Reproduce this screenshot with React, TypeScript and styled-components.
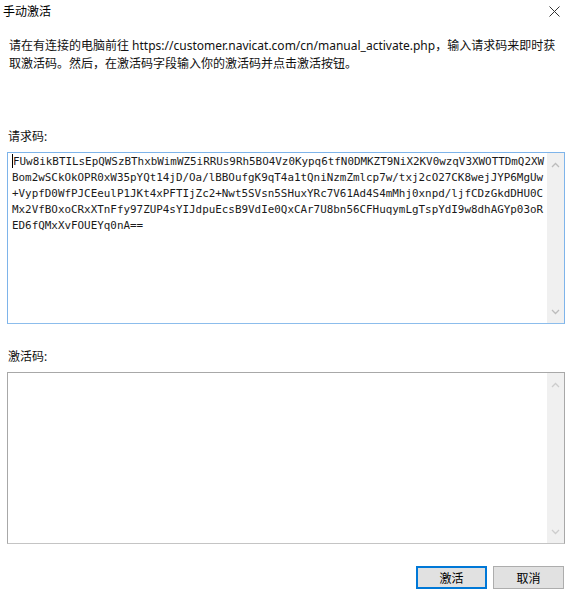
import React from 'react';
import styled, { createGlobalStyle } from 'styled-components';

const requestLines = [
  'FUw8ikBTILsEpQWSzBThxbWimWZ5iRRUs9Rh5BO4Vz0Kypq6tfN0DMKZT9NiX2KV0wzqV3XWOTTDmQ2XW',
  'Bom2wSCkOkOPR0xW35pYQt14jD/Oa/lBBOufgK9qT4a1tQniNzmZmlcp7w/txj2cO27CK8wejJYP6MgUw',
  '+VypfD0WfPJCEeulP1JKt4xPFTIjZc2+Nwt5SVsn5SHuxYRc7V61Ad4S4mMhj0xnpd/ljfCDzGkdDHU0C',
  'Mx2VfBOxoCRxXTnFfy97ZUP4sYIJdpuEcsB9VdIe0QxCAr7U8bn56CFHuqymLgTspYdI9w8dhAGYp03oR',
  'ED6fQMxXvFOUEYq0nA==',
];

const GlobalStyle = createGlobalStyle`
  html, body {
    margin: 0;
    padding: 0;
    background: #ffffff;
  }
  body {
    font-family: "Noto Sans", "Noto Sans CJK SC", sans-serif;
    color: #000;
  }
`;

const Chevron = ({ up, color }: { up?: boolean; color: string }) => (
  <svg width="9" height="6" viewBox="0 0 9 6">
    <path
      d={up ? 'M1 5 L4.5 1.5 L8 5' : 'M1 1 L4.5 4.5 L8 1'}
      fill="none"
      stroke={color}
      strokeWidth="1.3"
    />
  </svg>
);

const App = () => {
  return (
    <Dialog>
      <GlobalStyle />
      <TitleBar>
        <Title>手动激活</Title>
        <CloseButton>
          <svg width="11" height="11" viewBox="0 0 11 11">
            <path d="M0.5 0.5 L10.5 10.5 M10.5 0.5 L0.5 10.5" stroke="#333" strokeWidth="1" />
          </svg>
        </CloseButton>
      </TitleBar>
      <Body>
        <Intro>
          请在有连接的电脑前往 https://customer.navicat.com/cn/manual_activate.php，输入请求码来即时获
          <br />
          取激活码。然后，在激活码字段输入你的激活码并点击激活按钮。
        </Intro>
        <FieldLabel $gap={56}>请求码:</FieldLabel>
        <TextBox $focused>
          <Code>
            <Caret />
            {requestLines.join('\n')}
          </Code>
          <ScrollBar>
            <Chevron up color="#bcbcbc" />
            <Chevron color="#bcbcbc" />
          </ScrollBar>
        </TextBox>
        <FieldLabel $gap={25}>激活码:</FieldLabel>
        <TextBox>
          <Code />
          <ScrollBar>
            <Chevron up color="#cdcdcd" />
            <Chevron color="#cdcdcd" />
          </ScrollBar>
        </TextBox>
        <Actions>
          <Button $primary>激活</Button>
          <Button>取消</Button>
        </Actions>
      </Body>
    </Dialog>
  );
};

const Dialog = styled.div`
  width: 571px;
  height: 595px;
  display: flex;
  flex-direction: column;
  background: #ffffff;
  font-size: 12px;
`;

const TitleBar = styled.div`
  height: 24px;
  display: flex;
  align-items: center;
  justify-content: space-between;
  padding: 0 11px 0 3px;
`;

const Title = styled.span`
  font-size: 12px;
  line-height: 16px;
  margin-top: -1px;
`;

const CloseButton = styled.span`
  display: flex;
  margin-top: -1px;
`;

const Body = styled.div`
  display: flex;
  flex-direction: column;
  padding: 0 6px 0 7px;
`;

const Intro = styled.p`
  margin: 13px 0 0 2px;
  font-size: 12px;
  line-height: 18px;
  color: #111;
  white-space: nowrap;
`;

const FieldLabel = styled.div<{ $gap: number }>`
  margin: ${(p) => p.$gap}px 0 7px 1px;
  font-size: 12px;
  line-height: 16px;
  height: 16px;
  color: #111;
`;

const TextBox = styled.div<{ $focused?: boolean }>`
  height: 170px;
  display: flex;
  border: 1px solid ${(p) => (p.$focused ? '#7eb4ea' : '#a8a8a8')};
  border-bottom-color: ${(p) => (p.$focused ? '#8cbdec' : '#c4c4c4')};
  background: #fff;
`;

const Code = styled.div`
  flex: 1;
  padding: 1px 4px;
  font-family: "DejaVu Sans Mono", "Liberation Mono", monospace;
  font-size: 10.9px;
  line-height: 16px;
  white-space: pre;
  color: #1a1a1a;
  overflow: hidden;
`;

const Caret = styled.span`
  display: inline-block;
  width: 0;
  height: 14px;
  border-left: 1px solid #000;
  vertical-align: -3px;
`;

const ScrollBar = styled.div`
  width: 17px;
  background: #f0f0f0;
  display: flex;
  flex-direction: column;
  justify-content: space-between;
  align-items: center;
  padding: 9px 0 8px;
`;

const Actions = styled.div`
  display: flex;
  justify-content: flex-end;
  gap: 6px;
  margin-top: 22px;
  padding-right: 1px;
`;

const Button = styled.button<{ $primary?: boolean }>`
  width: 71px;
  height: 23px;
  padding: 0;
  font-family: "Noto Sans CJK SC", sans-serif;
  font-size: 12px;
  color: #000;
  background: #e1e1e1;
  border: 1px solid ${(p) => (p.$primary ? '#0078d7' : '#adadad')};
  box-shadow: ${(p) => (p.$primary ? 'inset 0 0 0 1px #0078d7' : 'none')};
`;

export default App;
